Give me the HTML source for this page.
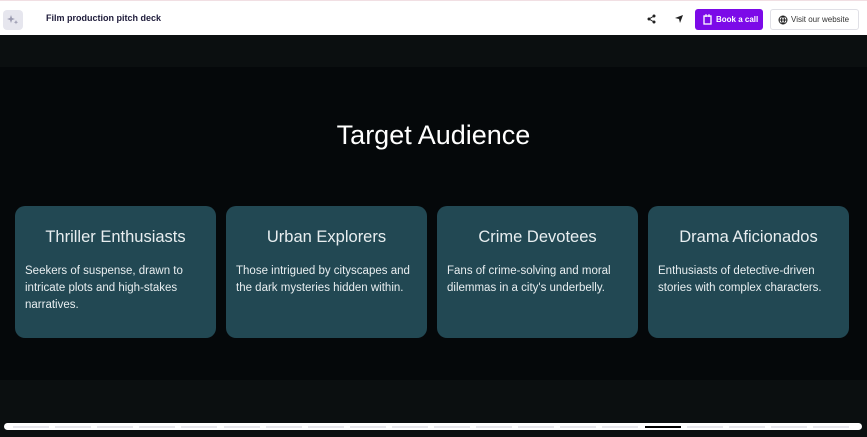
<!DOCTYPE html>
<html><head><style>
*{margin:0;padding:0;box-sizing:border-box}
body{width:867px;height:437px;overflow:hidden;background:#0b0f10;font-family:"Liberation Sans",sans-serif;position:relative}
.hdr{position:absolute;top:0;left:0;width:867px;height:35px;background:#fff;border-top:1px solid #f1dfe3}
.logo{position:absolute;left:3px;top:9px;width:20px;height:20px;border-radius:4px;background:#e6e6ee}
.ttl{position:absolute;left:46px;top:12px;font-size:9px;color:#1e1b3a;font-weight:bold}
.btn1{position:absolute;left:695px;top:8px;width:68px;height:21px;background:#7c0ae8;border-radius:3px;color:#fff;font-size:8px;font-weight:bold;padding:6px 0 0 21px}
.btn2{position:absolute;left:770px;top:8px;width:89px;height:21px;background:#fff;border:1px solid #e0e0e6;border-radius:3px;color:#333;font-size:8px;padding:5px 0 0 20px}
.sec{position:absolute;top:67px;left:0;width:867px;height:313px;background:#05080a}
h1{position:absolute;top:120px;width:867px;text-align:center;color:#fff;font-weight:normal;font-size:27px}
.card{position:absolute;top:206px;width:201px;height:132px;background:#224853;border-radius:10px;color:#e8eef0}
.card h2{font-size:16.5px;font-weight:normal;text-align:center;margin-top:22px}
.card p{font-size:11.5px;line-height:17px;margin:16px 10px 0 10px}
.bar{position:absolute;left:4px;top:423px;width:858px;height:7px;background:#fff;border-radius:4px}
.seg{position:absolute;top:3px;height:2px;background:#e6e6ec}
</style></head><body>
<div class="hdr">
<div class="logo"><svg width="20" height="20"><path d="M8 5l1 3 3 1-3 1-1 3-1-3-3-1 3-1z" fill="#9a9ab0"/><path d="M13 10l.6 1.6 1.6.6-1.6.6-.6 1.6-.6-1.6-1.6-.6 1.6-.6z" fill="#9a9ab0"/></svg></div>
<div class="ttl">Film production pitch deck</div>
<svg style="position:absolute;left:647px;top:13px" width="10" height="10"><circle cx="7" cy="2" r="1.5" fill="#222"/><circle cx="2" cy="5" r="1.5" fill="#222"/><circle cx="7" cy="8" r="1.5" fill="#222"/><path d="M7 2L2 5 7 8" stroke="#222" fill="none"/></svg>
<svg style="position:absolute;left:674px;top:13px" width="10" height="10"><path d="M1 4L9 1 6 9 5 5z" fill="#222"/></svg>
<div class="btn1"><svg style="position:absolute;left:8px;top:5px" width="9" height="11"><rect x="1" y="2" width="7" height="8" fill="none" stroke="#fff" stroke-width="1.3"/><path d="M3 0v3M6 0v3" stroke="#fff"/></svg>Book a call</div>
<div class="btn2"><svg style="position:absolute;left:7px;top:5px" width="10" height="10"><circle cx="5" cy="5" r="4" fill="none" stroke="#222"/><path d="M1 5h8M5 1c-2 2-2 6 0 8M5 1c2 2 2 6 0 8" stroke="#222" fill="none"/></svg>Visit our website</div>
</div>
<div class="sec"></div>
<h1>Target Audience</h1>
<div class="card" style="left:15px"><h2>Thriller Enthusiasts</h2><p>Seekers of suspense, drawn to intricate plots and high-stakes narratives.</p></div>
<div class="card" style="left:226px"><h2>Urban Explorers</h2><p>Those intrigued by cityscapes and the dark mysteries hidden within.</p></div>
<div class="card" style="left:437px"><h2>Crime Devotees</h2><p>Fans of crime-solving and moral dilemmas in a city's underbelly.</p></div>
<div class="card" style="left:648px"><h2>Drama Aficionados</h2><p>Enthusiasts of detective-driven stories with complex characters.</p></div>
<div class="bar" id="b"></div>
<script>
var b=document.getElementById('b');for(var i=0;i<20;i++){var d=document.createElement('div');d.className='seg';var x=9+i*42.1;d.style.left=x+'px';d.style.width='36px';if(i==15){d.style.background='#000';}b.appendChild(d);}
</script>
</body></html>
